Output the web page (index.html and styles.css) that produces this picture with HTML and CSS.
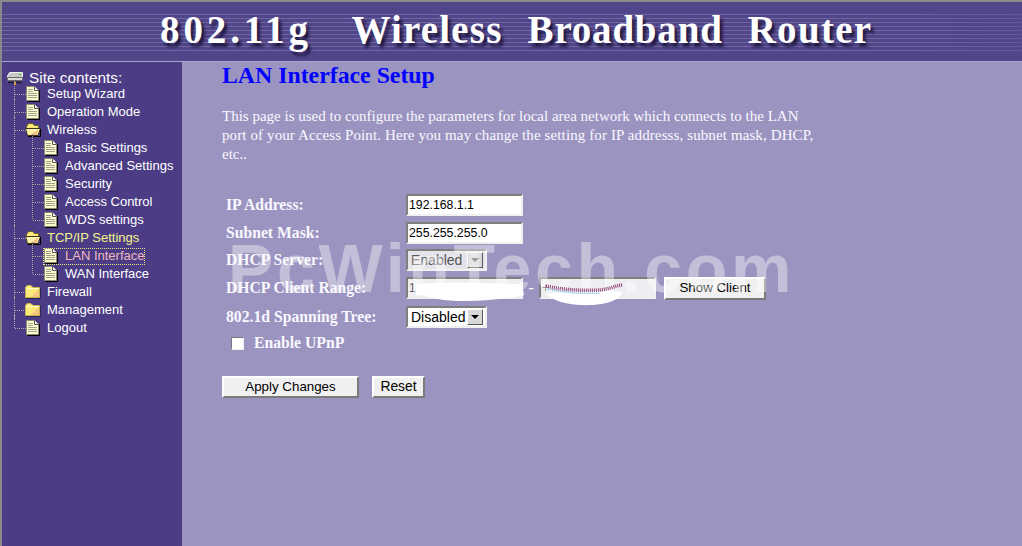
FILE: index.html
```html
<!DOCTYPE html>
<html lang="en">
<head>
<meta charset="utf-8">
<title>LAN Interface Setup</title>
<link rel="stylesheet" href="styles.css">
</head>
<body>
<svg class="defs" width="0" height="0" aria-hidden="true">
  <defs>
    <symbol id="doc" viewBox="0 0 14 16">
      <path d="M.5 .5H8.500L12.500 4.500V14.500H.5Z" fill="#fdfbcc" stroke="#8a8a78" stroke-width="1"/>
      <path d="M13.500 4V15.500H1.500" fill="none" stroke="#000" stroke-width="1"/>
      <path d="M8.500 .5V4.500H12.500" fill="#fff" stroke="#555" stroke-width="1"/>
      <path d="M2 3.500H7M2 5.500H7M2 7.500H11M2 9.500H11M2 11.500H11" stroke="#a0a08c" stroke-width="1"/>
    </symbol>
    <symbol id="closed" viewBox="0 0 16 14">
      <path d="M.5 2.500L2 .5H6L8 2.500H14.500V12.500H.5Z" fill="#fce978" stroke="#c4b450"/>
      <path d="M6 12L14 4V12Z" fill="#f3bd84" opacity=".8"/>
      <path d="M1.500 3.500H14" stroke="#fffad0"/>
      <path d="M15.500 3V13.500H1" fill="none" stroke="#2e2650"/>
    </symbol>
    <symbol id="open" viewBox="0 0 16 14">
      <path d="M1.500 3.500L3.500 .5H7.500L9.500 2.500H13.500V6H1.500Z" fill="#fce978" stroke="#6a6028"/>
      <path d="M.5 5.500H15.500L13 12.500H2.500Z" fill="#fdf0aa" stroke="#3a3418"/>
      <path d="M5 12L13 7L12 12Z" fill="#eeae70" opacity=".75"/>
      <path d="M15.500 6V13.500H3" fill="none" stroke="#000"/>
    </symbol>
    <symbol id="server" viewBox="0 0 16 13">
      <path d="M.5 4L2.500 .5H15.500V4L14.500 6H.5Z" fill="#c8c8c8" stroke="#efefef"/>
      <path d="M.5 5.500H15.500V8.500H.5Z" fill="#dcdcdc" stroke="#6a6a6a"/>
      <rect x="12" y="2" width="2" height="1" fill="#30d030"/>
      <path d="M1 10.500H15" stroke="#1c1c2c" stroke-width="1.500"/>
      <rect x="7" y="10" width="2" height="3" fill="#e89020"/>
    </symbol>
  </defs>
</svg>
<div class="frame">
  <header class="banner">
    <h1 class="banner-title"><span class="t-a">802.11g</span><span class="t-b">Wireless</span><span class="t-c">Broadband</span><span class="t-d">Router</span></h1>
  </header>
  <div class="columns">
    <nav class="side">
      <div class="side-head">
        <svg class="ic-server"><use href="#server"/></svg>
        <span>Site contents:</span>
      </div>
      <ul class="tree">
        <li><a class="row"><svg class="ic-doc"><use href="#doc"/></svg><span>Setup Wizard</span></a></li>
        <li><a class="row"><svg class="ic-doc"><use href="#doc"/></svg><span>Operation Mode</span></a></li>
        <li>
          <a class="row"><svg class="ic-folder"><use href="#open"/></svg><span>Wireless</span></a>
          <ul class="tree">
            <li><a class="row"><svg class="ic-doc"><use href="#doc"/></svg><span>Basic Settings</span></a></li>
            <li><a class="row"><svg class="ic-doc"><use href="#doc"/></svg><span>Advanced Settings</span></a></li>
            <li><a class="row"><svg class="ic-doc"><use href="#doc"/></svg><span>Security</span></a></li>
            <li><a class="row"><svg class="ic-doc"><use href="#doc"/></svg><span>Access Control</span></a></li>
            <li><a class="row"><svg class="ic-doc"><use href="#doc"/></svg><span>WDS settings</span></a></li>
          </ul>
        </li>
        <li>
          <a class="row is-open"><svg class="ic-folder"><use href="#open"/></svg><span>TCP/IP Settings</span></a>
          <ul class="tree">
            <li><a class="row is-active"><svg class="ic-doc"><use href="#doc"/></svg><span>LAN Interface</span></a></li>
            <li><a class="row"><svg class="ic-doc"><use href="#doc"/></svg><span>WAN Interface</span></a></li>
          </ul>
        </li>
        <li><a class="row"><svg class="ic-folder"><use href="#closed"/></svg><span>Firewall</span></a></li>
        <li><a class="row"><svg class="ic-folder"><use href="#closed"/></svg><span>Management</span></a></li>
        <li><a class="row"><svg class="ic-doc"><use href="#doc"/></svg><span>Logout</span></a></li>
      </ul>
    </nav>
    <main class="content">
      <h2 class="page-title">LAN Interface Setup</h2>
      <p class="intro">This page is used to configure the parameters for local area network which connects to the LAN <span class="intro-wide">port of your Access Point. Here you may change the setting for IP addresss, subnet mask, DHCP,</span> etc..</p>
      <form class="lan-form">
        <label class="f-label">IP Address:</label>
        <div class="f-field"><input class="txt" type="text" value="192.168.1.1"></div>
        <label class="f-label">Subnet Mask:</label>
        <div class="f-field"><input class="txt" type="text" value="255.255.255.0"></div>
        <label class="f-label">DHCP Server:</label>
        <div class="f-field"><span class="sel is-off"><span class="sel-val">Enabled</span><span class="sel-btn"></span></span></div>
        <label class="f-label">DHCP Client Range:</label>
        <div class="f-field range">
          <input class="txt is-off" type="text" value="1">
          <span class="dash">-</span>
          <input class="txt is-off" type="text" value="+">
          <button class="btn btn-show" type="button">Show Client</button>
        </div>
        <label class="f-label">802.1d Spanning Tree:</label>
        <div class="f-field"><span class="sel"><span class="sel-val">Disabled</span><span class="sel-btn"></span></span></div>
        <label class="upnp"><span class="check"></span><span>Enable UPnP</span></label>
        <div class="actions">
          <button class="btn btn-apply" type="button">Apply Changes</button>
          <button class="btn btn-reset" type="button">Reset</button>
        </div>
      </form>
    </main>
  </div>
  <div class="watermark">PcWinTech.com</div>
  <svg class="smear smear-a" viewBox="0 0 120 24"><path d="M8 5C40 3 70 4 114 5L116 16C90 22 50 24 30 20C22 18 14 16 8 16Z" fill="#fff"/></svg>
  <svg class="smear smear-b" viewBox="0 0 116 28"><path d="M6 16C30 12 60 12 82 14C80 24 60 28 40 27C24 26 12 22 6 16Z" fill="#fff"/><path d="M6 8C24 12 44 13 60 12C70 11 74 8 82 7" fill="none" stroke="#8c3f70" stroke-width="3.500" stroke-dasharray="1 1"/><path d="M8 11C26 15 44 16 60 15" fill="none" stroke="#6fb4e0" stroke-width="1.500" stroke-dasharray="1 1"/></svg>
</div>
</body>
</html>
```
FILE: styles.css
```css
* { box-sizing: border-box; }
html, body { margin: 0; height: 100%; overflow: hidden; }
.defs { position: absolute; }
.frame {
  position: relative;
  width: 1022px;
  height: 546px;
  border-top: 2px solid #8a8a8a;
  border-left: 2px solid #8a8a8a;
  background: #9c94c0;
  display: flex;
  flex-direction: column;
  overflow: hidden;
}
.banner {
  height: 60px;
  flex: none;
  border-bottom: 1px solid #aaa4c8;
  background:
    linear-gradient(90deg, rgba(82,70,138,0) 85%, rgba(82,70,138,.4) 100%),
    repeating-linear-gradient(180deg, rgba(190,185,215,.28) 0 1px, transparent 1px 4px) 0 12px / 100% 37px no-repeat,
    #52468a;
}
.banner-title {
  margin: 0;
  padding: 8px 0 0 158px;
  display: flex;
  font: bold 39px/40px "Liberation Serif", serif;
  color: #fff;
  text-shadow: 3px 4px 3px #1f1a45;
  white-space: nowrap;
}
.t-a { letter-spacing: 3.900px; margin-right: 39.500px; }
.t-b { letter-spacing: 1.200px; margin-right: 25px; }
.t-c { letter-spacing: .8px; margin-right: 25px; }
.t-d { letter-spacing: 1.300px; }
.columns { flex: 1; display: flex; min-height: 0; }
.side {
  width: 180px;
  flex: none;
  background: #4b3c85;
  padding: 5px 0 0 5px;
  color: #fff;
  font: 13px/18px "Liberation Sans", sans-serif;
}
.side-head {
  display: flex;
  align-items: center;
  height: 20px;
  font-size: 15.400px;
  margin-top: 1px;
}
.ic-server { width: 16px; height: 13px; margin-right: 6px; flex: none; }
.tree { list-style: none; margin: 0; padding: 0; }
.side > .tree { margin-left: 7px; margin-top: -3px; }
.tree .tree { margin-left: 18px; }
.tree > li { position: relative; }
.tree > li::before {
  content: "";
  position: absolute;
  left: 0;
  top: -4px;
  bottom: 0;
  border-left: 1px dotted #b0a8a0;
}
.tree > li:last-child::before { bottom: auto; height: 13px; }
.tree .tree > li::before { top: -5px; }
.row {
  position: relative;
  display: flex;
  align-items: center;
  height: 18px;
  padding-left: 12px;
  white-space: nowrap;
}
.row::before {
  content: "";
  position: absolute;
  left: 1px;
  top: 9px;
  width: 11px;
  border-top: 1px dotted #b0a8a0;
}
.ic-doc { width: 14px; height: 16px; margin-right: 7px; flex: none; }
.ic-folder { width: 16px; height: 14px; margin-left: -1px; margin-right: 6px; flex: none; }
.row.is-open { color: #f4f48c; }
.row.is-active { color: #f0b8c0; }
.row.is-active::after {
  content: "";
  position: absolute;
  left: 11px;
  top: 1px;
  bottom: 0;
  width: 100px;
  border: 1px dotted #e6e67a;
}
.content {
  flex: 1;
  padding: 0 0 0 40px;
  color: #f8f8ff;
  font-family: "Liberation Serif", serif;
  min-width: 0;
}
.page-title {
  margin: 0;
  font: bold 23.800px/27px "Liberation Serif", serif;
  color: #0000ff;
}
.intro {
  width: 600px;
  margin: 18px 0 0;
  font-size: 15px;
  line-height: 19px;
}
.intro-wide { letter-spacing: .11px; }
.lan-form {
  display: grid;
  grid-template-columns: 184px auto;
  grid-template-rows: 28px 28px 26px 30px 28px 24px auto;
  align-items: center;
  justify-items: start;
  margin-top: 27px;
  font-weight: bold;
  font-size: 15.700px;
}
.f-label { padding-left: 4px; white-space: nowrap; }
.f-field { display: flex; align-items: center; }
.txt {
  width: 117px;
  height: 22px;
  padding: 1px;
  border: 2px solid;
  border-color: #7e7e7e #f0f0f0 #f0f0f0 #7e7e7e;
  background: #fff;
  color: #000;
  font: 12.300px "Liberation Sans", sans-serif;
}
.txt.is-off { color: #555; background: #eeeef2; }
.range { gap: 0; }
.dash { width: 16px; text-align: center; font-weight: normal; color: #fff; }
.btn {
  height: 22px;
  padding: 0 0 2px;
  border: 2px solid;
  border-color: #fff #7a7a7a #7a7a7a #fff;
  background: #f0f0f0;
  color: #000;
  font: 13.330px "Liberation Sans", sans-serif;
}
.btn-show { width: 102px; height: 23px; margin-left: 8px; }
.btn-apply { width: 137px; }
.btn-reset { width: 53px; margin-left: 13px; font-size: 13.800px; }
.sel {
  display: flex;
  align-items: center;
  justify-content: space-between;
  width: 81px;
  height: 22px;
  padding: 0 2px 0 3px;
  border: 2px solid;
  border-color: #7e7e7e #f0f0f0 #f0f0f0 #7e7e7e;
  background: #fff;
  color: #000;
  font: 14px "Liberation Sans", sans-serif;
}
.sel.is-off { background: #e4e4ea; color: #555; }
.sel-btn {
  position: relative;
  width: 16px;
  height: 16px;
  background: #d8d8d8;
  border: 1px solid;
  border-color: #fff #555 #555 #fff;
}
.sel-btn::after {
  content: "";
  position: absolute;
  left: 3px;
  top: 5px;
  border: 4px solid transparent;
  border-top-color: #000;
  border-bottom: 0;
}
.sel.is-off .sel-btn::after { border-top-color: #555; }
.upnp {
  grid-column: 1 / -1;
  display: flex;
  align-items: center;
  padding-left: 9px;
}
.check {
  width: 13px;
  height: 13px;
  margin-right: 10px;
  background: #fff;
  border: 1px solid;
  border-color: #777 #eee #eee #777;
}
.actions {
  grid-column: 1 / -1;
  display: flex;
  margin-top: 21px;
}
.watermark {
  position: absolute;
  left: 226px;
  top: 226px;
  font: bold 68px/80px "Liberation Sans", sans-serif;
  letter-spacing: 3.650px;
  color: rgba(255,255,255,.4);
  white-space: nowrap;
  pointer-events: none;
}
.smear { position: absolute; pointer-events: none; filter: blur(.6px); }
.smear-a { left: 406px; top: 277px; width: 120px; height: 24px; }
.smear-b { left: 538px; top: 276px; width: 116px; height: 28px; }
```
